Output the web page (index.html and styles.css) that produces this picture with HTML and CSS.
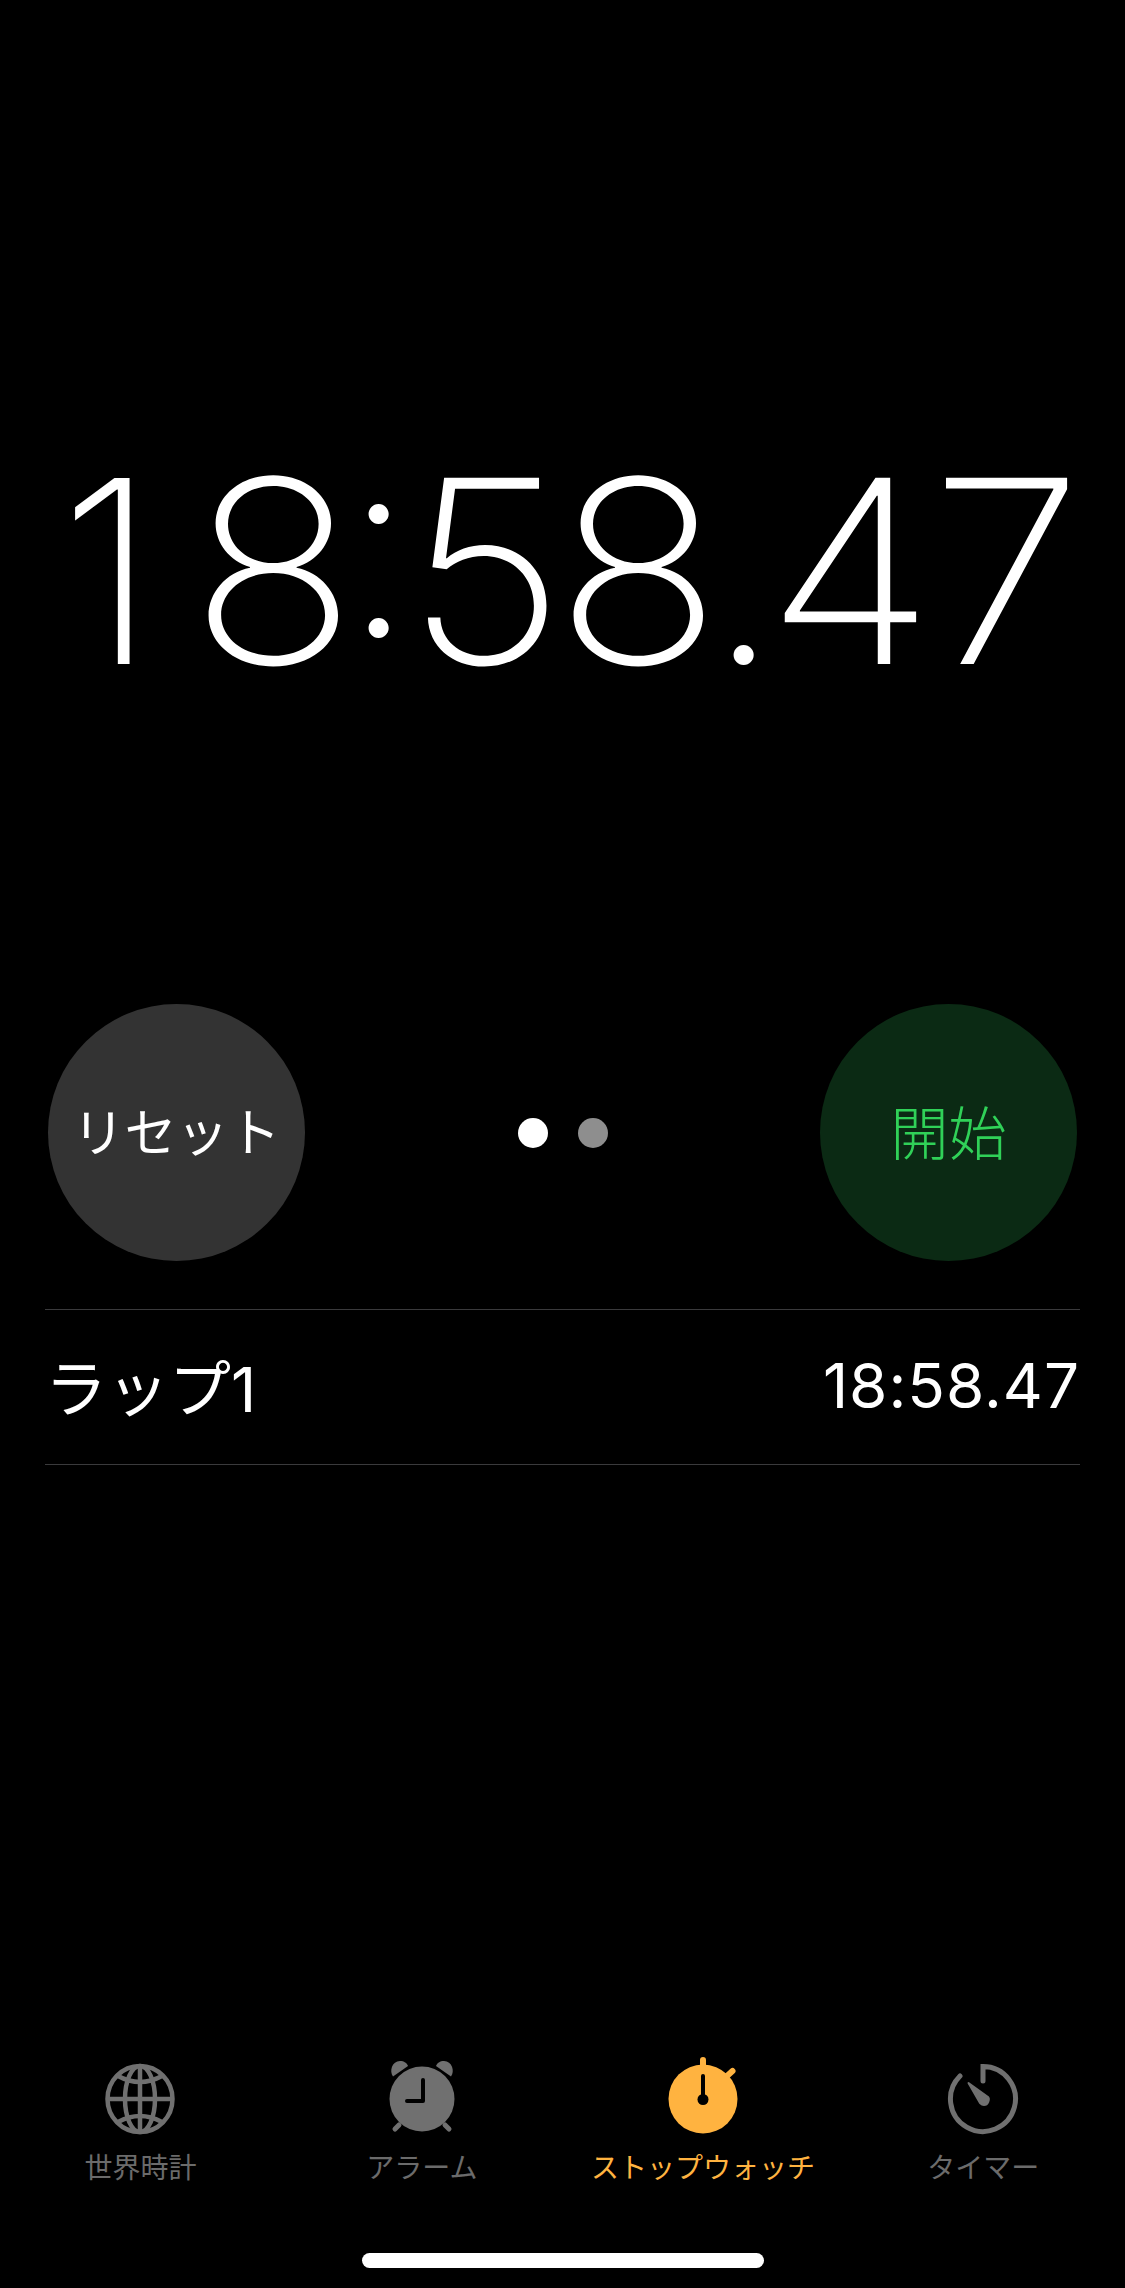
FILE: index.html
```html
<!DOCTYPE html>
<html lang="ja">
<head>
    <meta charset="UTF-8">
    <meta name="viewport" content="width=device-width, initial-scale=1.0">
    <title>ストップウォッチ</title>
    <link rel="stylesheet" href="styles.css">
</head>
<body>
    <main class="screen">
        <div class="time">
            <span class="digit digit-one">1</span>
            <span class="digit digit-wide">8</span>
            <span class="sep sep-colon">:</span>
            <span class="digit digit-wide">5</span>
            <span class="digit digit-wide">8</span>
            <span class="sep">.</span>
            <span class="digit digit-wide">4</span>
            <span class="digit digit-wide digit-last">7</span>
        </div>

        <div class="controls">
            <div class="round-btn btn-reset"><span class="btn-text">リセット</span></div>
            <div class="dots">
                <span class="dot dot-on"></span>
                <span class="dot"></span>
            </div>
            <div class="round-btn btn-start"><span class="btn-text">開始</span></div>
        </div>

        <div class="lap">
            <span class="lap-name">ラップ1</span>
            <span class="lap-time">18:58.47</span>
        </div>

        <nav class="tabs">
            <div class="tab">
                <svg class="tab-icon" viewBox="-42 -42 84 84">
                    <g fill="none" stroke="#707070" stroke-width="4.5">
                        <ellipse cx="-1" cy="0" rx="32.5" ry="33"/>
                        <ellipse cx="-1" cy="0" rx="15" ry="33"/>
                        <path d="M-1 -33V33M-33.5 0H31.5"/>
                        <path d="M-23 -23Q-1 -11 21 -23"/>
                        <path d="M-23 23Q-1 11 21 23"/>
                    </g>
                </svg>
                <span class="tab-label">世界時計</span>
            </div>
            <div class="tab">
                <svg class="tab-icon" viewBox="-42 -42 84 84">
                    <circle cx="0" cy="0" r="32.5" fill="#707070"/>
                    <path d="M-29 -22.5C-33 -28 -30 -38 -22 -38C-18 -38 -15 -36 -14 -33Z" fill="#707070"/>
                    <path d="M29 -22.5C33 -28 30 -38 22 -38C18 -38 15 -36 14 -33Z" fill="#707070"/>
                    <path d="M-23 26L-27 30M23 26L27 30" stroke="#707070" stroke-width="5" stroke-linecap="round"/>
                    <path d="M1 -19V2H-15" fill="none" stroke="#000" stroke-width="4" stroke-linecap="round" stroke-linejoin="round"/>
                </svg>
                <span class="tab-label">アラーム</span>
            </div>
            <div class="tab tab-on">
                <svg class="tab-icon" viewBox="-42 -42 84 84">
                    <circle cx="0" cy="0" r="34.5" fill="#ffb340"/>
                    <path d="M0 -39V-32M24 -23L29.5 -28" stroke="#ffb340" stroke-width="6" stroke-linecap="round"/>
                    <path d="M0 -23V0" stroke="#000" stroke-width="4" stroke-linecap="round"/>
                    <circle cx="0" cy="0.5" r="5.5" fill="#000"/>
                </svg>
                <span class="tab-label">ストップウォッチ</span>
            </div>
            <div class="tab tab-last">
                <svg class="tab-icon" viewBox="-42 -42 84 84">
                    <path d="M0 -18V-32.5A32.5 32.5 0 1 1 -23 -23" fill="none" stroke="#707070" stroke-width="5" stroke-linecap="round"/>
                    <path d="M-14.5 -16L5 -2C7 0 5 6 1 6C-1 6 -2 5 -3 4Z" fill="#707070" stroke="#707070" stroke-width="2" stroke-linejoin="round"/>
                </svg>
                <span class="tab-label">タイマー</span>
            </div>
        </nav>

        <div class="home-bar"></div>
    </main>
</body>
</html>
```

FILE: styles.css
```css
* {
    box-sizing: border-box;
}
html, body {
    margin: 0;
    background-color: #000;
}
.screen {
    width: 1125px;
    height: 2288px;
    display: flex;
    flex-direction: column;
    color: #fff;
    font-family: Inter, "Noto Sans CJK JP", sans-serif;
    overflow: hidden;
}
.time {
    height: 1004px;
    padding: 416px 0 0 33px;
    display: flex;
    align-items: flex-start;
    font-size: 256px;
    font-weight: 200;
    line-height: 310px;
    letter-spacing: -20px;
}
.digit {
    width: 153px;
    display: flex;
    justify-content: center;
}
.digit-one {
    justify-content: flex-start;
    padding-left: 26px;
}
.digit-wide {
    transform: scaleX(1.08);
}
.digit-last {
    padding-left: 6px;
}
.sep {
    width: 59px;
    display: flex;
    justify-content: center;
}
.sep-colon {
    margin-top: -27px;
}
.controls {
    display: flex;
    justify-content: space-between;
    align-items: center;
    padding: 0 48px;
}
.round-btn {
    width: 257px;
    height: 257px;
    border-radius: 50%;
    display: flex;
    align-items: center;
    justify-content: center;
    font-family: "Noto Sans CJK JP", sans-serif;
}
.btn-text {
    margin-top: -6px;
}
.btn-reset {
    background-color: #333;
    font-size: 52px;
}
.btn-start {
    background-color: #0b2a14;
    color: #30d158;
    font-size: 58px;
    font-weight: 300;
}
.dots {
    display: flex;
    gap: 30px;
}
.dot {
    width: 30px;
    height: 30px;
    border-radius: 50%;
    background-color: #8e8e8e;
}
.dot-on {
    background-color: #fff;
}
.lap {
    margin: 48px 45px 0;
    height: 156px;
    padding-bottom: 4px;
    display: flex;
    justify-content: space-between;
    align-items: center;
    border-top: 1px solid #3a3a3c;
    border-bottom: 1px solid #3a3a3c;
    font-size: 62px;
}
.lap-time {
    letter-spacing: 1px;
}
.tabs {
    margin-top: auto;
    display: grid;
    grid-template-columns: repeat(4, 1fr);
}
.tab {
    display: flex;
    flex-direction: column;
    align-items: center;
    color: #6b6b6b;
}
.tab-on {
    color: #ffb340;
}
.tab-last {
    padding-right: 2px;
}
.tab-icon {
    width: 84px;
    height: 84px;
}
.tab-label {
    margin-top: 5px;
    font-family: "Noto Sans CJK JP", sans-serif;
    font-size: 28px;
    line-height: 40px;
}
.home-bar {
    width: 402px;
    height: 15px;
    margin: 67px auto 20px;
    border-radius: 8px;
    background-color: #fff;
}
```
